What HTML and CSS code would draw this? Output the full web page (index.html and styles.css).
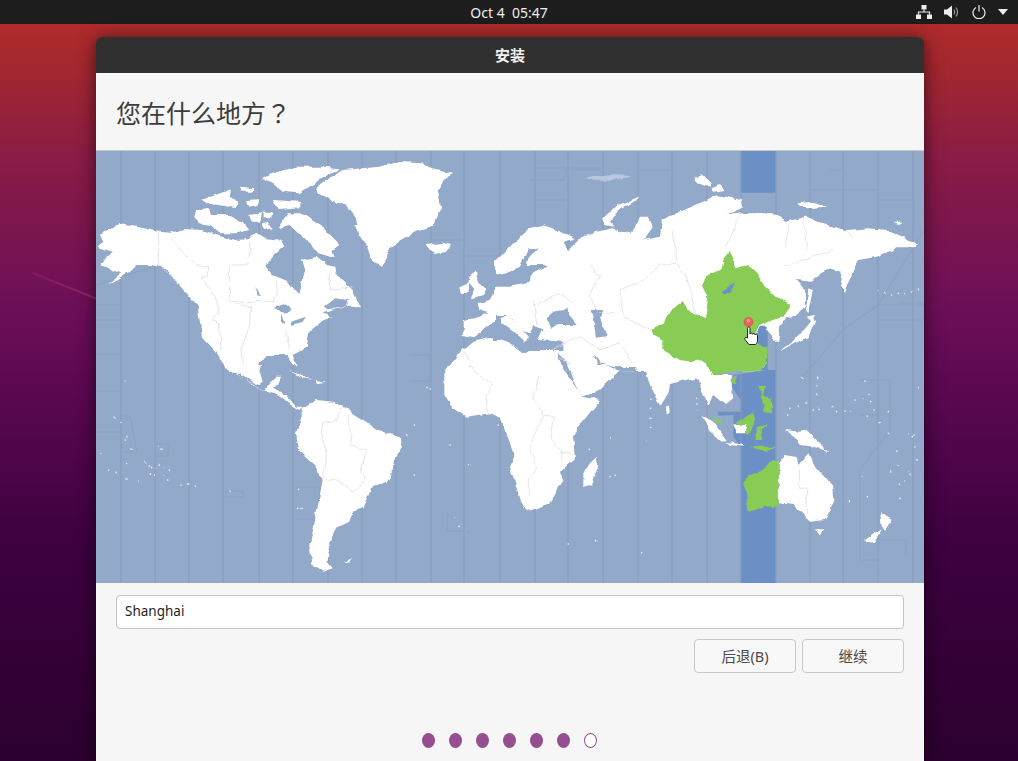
FILE: index.html
```html
<!doctype html>
<html lang="zh-CN">

<head>
    <meta charset="utf-8" />
    <link rel="icon" href="data:,">
    <meta name="viewport" content="width=device-width, initial-scale=1">
    <link rel="stylesheet" href="styles.css">
</head>

<body>
    <div class="topbar">
        <div class="clock">Oct 4&nbsp; 05:47</div>
        <div class="status">
            <svg class="icon-net" width="16" height="14" viewBox="0 0 16 14">
                <path d="M5.500 0h5v4.500h-5zM0 9.500h5V14H0zM11 9.500h5V14h-5z" />
                <path class="wire" d="M8 4.500v2.500M2.500 9.500V7h11v2.500" />
            </svg>
            <svg class="icon-vol" width="16" height="14" viewBox="0 0 16 14">
                <path d="M0 4.500h3L8 .5v13l-5-4H0z" />
                <path class="wave" d="M10 4.500q1.500 2.500 0 5M12 2.500q3 4.500 0 9" />
            </svg>
            <svg class="icon-power" width="14" height="14" viewBox="0 0 14 14">
                <path class="ring" d="M4 2.500a6 6 0 1 0 6 0M7 0v6.500" />
            </svg>
            <svg class="icon-caret" width="10" height="6" viewBox="0 0 10 6">
                <path d="M0 0h10L5 6z" />
            </svg>
        </div>
    </div>

    <div class="desktop">
        <div class="window">
            <div class="titlebar">安装</div>
            <div class="content">
                <h1 class="heading"><span>您在什么地方<span class="qmark" lang="zh-TW">？</span></span></h1>

                <svg class="map" viewBox="96 151 828 432" width="828" height="432">
                    <defs>
                        <filter id="coast" filterUnits="userSpaceOnUse" x="96" y="151" width="828" height="432" color-interpolation-filters="sRGB">
                            <feTurbulence type="fractalNoise" baseFrequency="0.09" numOctaves="3" seed="4" result="noise" />
                            <feDisplacementMap in="SourceGraphic" in2="noise" scale="5" xChannelSelector="R" yChannelSelector="G" />
                            <feGaussianBlur stdDeviation="0.35" />
                        </filter>
                    </defs>

                    <rect class="sea" x="96" y="151" width="828" height="432" />

                    <!-- selected zone -->
                    <g transform="translate(500 150) scale(.33333)">
                        <path class="zone" d="M722 3h105v125H722z" />
                        <path class="zone" d="M772 530h31v130h-31z" />
                    </g>
                    <g transform="translate(500 365) scale(.33333)">
                        <path class="zone" d="M700 30L800 15h27v640H722V245L700 215V150L655 152V140H722V105L695 65z" />
                    </g>

                    <!-- zone lines -->
                    <path class="tz" d="M121 151V583M155 151V583M189 151V583M223 151V583M259 151V583M293 151V583M328 151V583M362 151V583M396 151V583M431 151V583M464 151V583M500 151V583M535 151V583M568 151V583M603 151V583M638 151V583M672 151V583M707 151V583M741 151V583M776 151V583M810 151V583M843 151V583M878 151V583M913 151V583" />
                    <path class="tz-soft" d="M96 305H121V354H96M96 391H121V432H96M123 416H130L137 452H120M155 444H168V456H155M225 491H243V497H225M296 487H319V519H296M447 531H468V534M447 512V533M410 381H430V355H410M431 240H464V262M464 256H500V180M530 180H565V170H600M535 168H603V173M568 200H535V235M640 170H672V173M830 170H843V190H810V230H843M843 190H878M878 200H914V230M878 305H924M878 305L843 330L800 380M924 230L878 305M898 303H924V320H878M860 380H890V430L860 470V560H878M878 540H906V556M860 415H878V450M96 285L156 266M96 320H120" />

                    <g filter="url(#coast)">
                        <!-- north america, greenland, western europe -->
                        <g transform="translate(96 150) scale(.33333)">
                            <path class="land" d="M5 290L22 272 12 255 70 222 130 232 185 245 225 248 265 237 320 240 370 258 415 270 460 268 480 248 510 268 555 272 565 288 535 315 508 348 530 375 572 392 592 418 610 435 618 400 628 360 618 330 660 320 690 345 718 350 722 375 770 420 792 472 755 470 722 478 680 490 705 500 680 512 640 545 632 590 590 612 605 650 592 640 575 615 520 615 490 635 480 665H400L360 605 318 560 305 470 280 440 245 400 210 355 165 345 120 345 95 370 30 405 75 370 40 355 10 345 50 305z" />
                            <path class="land" d="M660 115L700 85 740 60 850 50 900 35 980 40 1005 55 1075 68 1040 90 1025 120 1035 170 1010 230 960 245 900 280 875 310 855 348 825 325 810 280 790 260 780 205 750 165 700 150 670 130z" />
                            <path class="land" d="M315 150L350 135 405 115 400 140 430 155 420 175 370 165 330 160zM300 180L340 178 345 195 400 195 440 215 460 240 420 250 370 250 340 225 310 220 295 205zM575 190L620 190 660 215 690 235 695 250 730 285 710 300 715 325 670 310 650 285 625 270 600 240 580 225 545 235zM530 70L600 50 680 50 735 55 690 75 640 110 610 130 560 125 530 100 500 85zM530 150L610 155 610 175 550 180zM435 110L475 115 470 125 440 125zM450 150L490 148 485 170 455 165zM500 185L530 185 525 205 500 205zM460 195L495 190 490 215 465 215zM495 220L520 215 530 235 505 240zM775 225L800 230 805 270 790 260z" />
                            <path class="land" d="M990 285L1040 278 1065 285 1050 305 1015 312 995 300zM1120 380L1140 365 1145 395 1170 420 1165 435 1125 445 1135 420 1118 400zM1090 410L1120 400 1118 425 1095 432z" />
                            <path class="land" d="M1270 275L1225 310 1200 345 1215 360 1250 395H1270zM1270 405L1215 412 1180 450 1145 460 1150 480 1175 490 1135 505 1100 510 1100 555 1135 562 1180 525 1230 505 1270 535zM1050 660L1100 600 1130 575 1200 560 1270 565V665H1050z" />
                            <path class="water" d="M530 470L560 460 590 480 570 490zM555 490L565 520 555 520zM585 515L630 500 620 515 590 525zM478 410L495 440 485 440zM680 470L720 445 755 450 750 470 700 480z" />
                            <path class="border" d="M188 245V345L245 395M400 350V455L465 470 460 530 435 600 440 655M225 265L260 310 300 345 335 350V375L315 380 360 440 370 490 350 510 370 520 375 600M460 270V345H400M400 455H530M540 390L545 430 530 460M570 540L580 600M700 370V420L770 410M1100 600L1130 640M1220 570L1230 650" />
                        </g>

                        <!-- americas south, pacific, west africa -->
                        <g transform="translate(96 365) scale(.33333)">
                            <path class="land" d="M410 0L435 35 480 65 505 75 515 60 540 35 555 35 545 60 530 70 575 95 600 125 625 125 610 135 585 120 555 95 510 78 470 62 430 30 400 0zM415 0H495L490 20 500 50 480 60 440 30z" />
                            <path class="land" d="M620 130L660 105 710 110 740 125 770 145 810 170 850 195 915 220 918 245 890 290 885 340 825 370 800 430 770 440 760 470 720 490 700 530 695 590 710 610 680 620 650 600 640 540 655 480 680 345 660 305 610 260 600 205 620 160z" />
                            <path class="land" d="M1045 30L1060 0H1275V350L1245 310 1255 270 1215 160 1180 145 1110 155 1070 130 1045 90zM580 20L610 30 650 45 620 40zM660 45L690 50 660 55zM740 590L765 580 760 590z" />
                            <path class="border" d="M680 175L675 220 695 260 680 345M680 175L715 170 740 125M755 150L765 210 760 240 810 255 795 320 810 340 770 385 730 345 690 350M1115 0L1190 60 1170 90 1175 145M1225 0L1260 20" />
                            <path class="dots" d="M88 45h0M60 157h0M75 172h0M90 215h0M85 225h0M108 252h0M15 265h0M95 298h0M35 315h0M60 322h0M90 342h0M130 352h0M135 310h0M150 290h0M160 300h0M170 305h0M180 310h0M190 300h0M205 310h0M220 318h0M205 330h0M215 345h0M175 330h0M160 325h0M258 358h0M275 360h0M298 360h0M405 380h0M608 373h0M605 430h0M615 430h0M955 180h0M935 213h0M1060 240h0M1118 298h0M958 330h0M1075 457h0M1092 484h0M990 68h0M1000 72h0M1207 183h0M190 245h0M198 255h0" />
                        </g>

                        <!-- asia -->
                        <g transform="translate(500 150) scale(.33333)">
                            <path class="land" d="M-15 335L0 320 40 280 90 235 130 225 170 240 225 265 190 275 205 300 235 270 255 255 290 245 340 235 365 245 395 250 420 200 445 200 455 235 430 270 480 260 485 210 540 185 600 160 650 135 725 150 730 175 680 195 725 190 790 190 830 195 855 215 920 200 980 225 1040 240 1110 235 1160 240 1220 265 1255 285 1240 295 1190 295 1130 320 1075 330 1060 360 1035 430 1020 400 1025 365 990 355 930 395 890 390 915 420 915 470 875 505 860 500 840 530 835 575 820 575 805 540 780 560 800 640 775 665H-15z" />
                            <path class="water" d="M-15 375L25 365 60 350 85 295 115 290 85 325 80 345 150 345 100 370 80 400 30 410-15 410zM-15 495L20 495 40 510 60 540 90 550 100 525 130 535 115 570 190 575 190 600 90 600 70 610 40 585 0 570-15 570zM140 505L170 480 205 475 210 500 230 525 180 525 150 530zM275 480L310 480 300 505 320 555 290 560 285 520zM170 605L190 620 210 665H195zM280 612L300 640 345 652 410 650 415 665H300z" />
                            <path class="land" d="M0 500L25 497 60 530 88 562 75 578 40 545 8 522z" />
                            <path class="green" d="M455 540L490 520 510 480 545 457 575 490 615 505 625 440 608 405 620 375 665 360 670 330 690 305 705 335 705 355 745 345 770 370 795 410 830 440 875 465 850 500 815 510 775 530 760 565 785 590 803 590 800 640 775 665H620V640L595 625 570 635 540 630 490 600 490 570 460 555z" />
                            <path class="zone" d="M665 430L705 395 695 420 672 435zM780 530L800 530 803 590 785 590 760 565z" />
                            <path class="land" d="M845 600L880 575 920 530 940 505 945 515 925 560 885 580 850 600zM920 500L945 495 935 515zM925 415L938 420 925 490 918 480zM310 205L350 165 420 140 415 150 360 175 330 215 345 230 315 225zM580 85L610 75 635 100 630 110 590 95zM635 115L660 105 675 120 640 125zM890 160L940 155 985 170 960 172 920 175 895 170zM1180 215L1205 215 1195 222z" />
                            <path class="faint" d="M260 82L330 72 395 75 340 92 280 92z" />
                            <path class="border" d="M270 345L300 380 270 440 295 490 350 490M360 420L440 385 480 345 530 340 560 380 590 500M530 330L520 240M680 290L720 190M855 290L870 220M850 350L1000 300M360 420L370 500 430 530 455 540M100 470L180 430 220 460M150 600L240 560 300 600 360 580M180 620L230 660M370 590L400 650M100 450L110 520M1040 240L1060 270M920 300L910 200" />
                            <path class="dots" d="M1135 422h0M1155 428h0M1175 432h0M1195 430h0M1215 428h0M1235 426h0M1255 420h0" />
                        </g>

                        <!-- east africa, south asia, oceania -->
                        <g transform="translate(500 365) scale(.33333)">
                            <path class="land" d="M-15 0H180L240 85 245 95 300 105 240 180 220 220 225 280 180 320 190 345 150 415 105 432 80 438 60 400 40 340 30 310 40 270 20 190 0 155-15 150z" />
                            <path class="land" d="M205 0H320L358 20 300 75 245 95 215 40zM340-5H620L640 30 695 30 695 60 700 100 675 120 640 90 625 120 590 40 510 60 505 85 480 125 450 60 440 30 415 5 340 5z" />
                            <path class="land" d="M497 125L510 120 512 140 500 145zM290 275L295 300 275 365 250 360 250 325 270 295zM605 150L640 170 680 225 665 230 625 195zM680 230L730 240 735 245 690 240zM700 178L740 180 735 205 710 205zM836 290L850 270 890 275 895 300 925 265 950 310 1000 365 1003 410 975 465 930 470 880 420 836 415zM945 490L970 490 960 512zM1140 442L1175 465 1155 495 1145 480zM1145 490L1125 530 1100 535 1095 525zM855 195L900 200 920 195 950 225 985 258 940 245 900 240 870 205z" />
                            <path class="green" d="M620 0L635 30 690 25 750 15 790 0zM780 5L788 5 778 25zM640 145L660 165 665 180 650 175zM705 175L760 140 765 160 745 210 735 205 740 180zM770 190L805 180 785 195 790 225 770 225zM775 60L795 60 790 90 810 100 820 125 815 145 790 140 785 85zM745 245L830 245 800 260 770 255zM700 35L710 35 705 55 695 55zM730 345L790 310 822 285 836 290V420L800 425 745 440 740 400z" />
                            <path class="border" d="M898 310V370H920V450M120 35L100 100 130 150 90 240 110 310 85 340 85 395M130 150L160 160 150 220 185 260 185 290M180 265H220" />
                            <path class="dots" d="M330 217h0M450 100h0M452 130h0M450 160h0M452 185h0M440 230h0M268 253h0M330 335h0M345 328h0M208 540h0M290 530h0M425 563h0M590 100h0M588 120h0M592 135h0M950 40h0M950 60h0M950 85h0M905 38h0M1095 48h0M1255 68h0M860 150h0M870 130h0M895 120h0M915 115h0M940 135h0M960 130h0M1000 125h0M1010 140h0M1035 138h0M1055 140h0M1065 105h0M1090 100h0M1110 85h0M1115 110h0M1105 150h0M1125 135h0M1165 140h0M1140 170h0M1165 205h0M1225 210h0M1245 210h0M1190 255h0M1245 250h0M1195 300h0M1175 315h0M1225 320h0M1255 285h0M1195 355h0M1215 345h0M1200 400h0M1105 395h0M1085 335h0M1045 410h0M1240 215h0M1230 330h0" />
                        </g>
                    </g>

                    <!-- pin and pointer -->
                    <path class="pin-stalk" d="M748.500 326V331" />
                    <circle class="pin" cx="748.500" cy="322" r="4.500" />
                    <circle class="pin-shine" cx="748.500" cy="320.500" r="2" />
                    <path class="hand" transform="translate(-1.500 -1)" d="M749 329.500c0-2 2.500-2 2.500 0v5.500c.5-1.500 2.500-1.200 2.500.3.500-1.300 2.500-1 2.500.5.500-1 2.500-.8 2.500.7v5c0 2-1 3-2 4h-6.500l-4-5c-1-1.500.8-3 2.500-1.500V329.500z" />
                </svg>

                <div class="form">
                    <input class="city" type="text" value="Shanghai" />
                    <div class="buttons">
                        <button class="btn">后退(B)</button>
                        <button class="btn">继续</button>
                    </div>
                </div>

                <div class="steps">
                    <span class="dot"></span>
                    <span class="dot"></span>
                    <span class="dot"></span>
                    <span class="dot"></span>
                    <span class="dot"></span>
                    <span class="dot"></span>
                    <span class="dot dot-current"></span>
                </div>
            </div>
        </div>
    </div>
</body>

</html>
```

FILE: styles.css
```css
html {
    font-family: "Noto Sans", "Noto Sans CJK SC", sans-serif;
    font-size: 14px;
}

body {
    margin: 0;
    height: 761px;
    overflow: hidden;
    display: flex;
    flex-direction: column;
}

.topbar {
    height: 24px;
    flex: none;
    background: #1d1d1d;
    color: #eeeeee;
    display: grid;
    grid-template-columns: 1fr auto 1fr;
    align-items: center;
    font-size: 14px;
}

.clock {
    grid-column: 2;
}

.status {
    grid-column: 3;
    display: flex;
    justify-content: flex-end;
    align-items: center;
    gap: 12px;
    padding-right: 10px;
}

.status svg {
    fill: #eeeeee;
    display: block;
}

.wire,
.wave,
.ring {
    fill: none;
    stroke: #eeeeee;
    stroke-width: 1.2;
}

.wave {
    stroke: #9a9a9a;
}

.desktop {
    position: relative;
    flex: 1;
    min-height: 0;
    padding: 13px 94px 0 96px;
    background: linear-gradient(180deg, #b02b2c 0%, #a3272f 6%, #8a1c45 18%, #6d0f58 38%, #5a0850 50%, #3e0140 70%, #2b002e 100%);
}

.desktop::before {
    content: "";
    position: absolute;
    left: 33px;
    top: 248px;
    width: 68px;
    height: 2px;
    background: linear-gradient(90deg, #7e1a62, #93265f);
    transform: rotate(22deg);
    transform-origin: left center;
}

.window {
    position: relative;
    width: 828px;
    height: 100%;
    box-shadow: 0 2px 18px rgba(0, 0, 0, 0.6);
    border-radius: 6px 6px 0 0;
    display: flex;
    flex-direction: column;
}

.titlebar {
    height: 36px;
    flex: none;
    box-sizing: border-box;
    padding-bottom: 2px;
    background: #303030;
    border-radius: 6px 6px 0 0;
    color: #f2f2f2;
    font-size: 15px;
    font-weight: 700;
    display: flex;
    align-items: center;
    justify-content: center;
}

.content {
    flex: 1;
    background: #f6f6f6;
    display: flex;
    flex-direction: column;
    overflow: hidden;
}

.heading {
    margin: 0;
    height: 78px;
    box-sizing: border-box;
    padding-left: 20px;
    border-bottom: 1px solid #cacaca;
    display: flex;
    align-items: center;
    font-family: "Noto Sans CJK SC", sans-serif;
    font-size: 25px;
    font-weight: 400;
    color: #3d3d3d;
}

.qmark {
    font-family: "Noto Sans CJK TC", sans-serif;
}

.map {
    display: block;
    flex: none;
}

.sea {
    fill: #93a9c9;
}

.zone {
    fill: #6c90c5;
}

.tz {
    fill: none;
    stroke: #869bbd;
    stroke-width: 1;
}

.tz-soft {
    fill: none;
    stroke: #8ba1c3;
    stroke-width: 1;
}

.land {
    fill: #ffffff;
}

.water {
    fill: #93a9c9;
}

.green {
    fill: #88cc55;
}

.faint {
    fill: #b9c8de;
}

.border {
    fill: none;
    stroke: #e0e0e0;
    stroke-width: 2.500;
}

.dots {
    fill: none;
    stroke: #eef2f8;
    stroke-width: 5;
    stroke-linecap: round;
}

.pin {
    fill: #ee5f5f;
    stroke: #d84a4a;
    stroke-width: 0.6;
}

.pin-shine {
    fill: #f58f8f;
}

.pin-stalk {
    fill: none;
    stroke: #c9c9c9;
    stroke-width: 1.500;
}

.hand {
    fill: #ffffff;
    stroke: #111111;
    stroke-width: 0.9;
}

.form {
    padding: 12px 20px 0;
    display: flex;
    flex-direction: column;
    gap: 10px;
}

.city {
    height: 34px;
    box-sizing: border-box;
    padding: 0 8px 2px;
    background: #ffffff;
    border: 1px solid #c4c4c4;
    border-radius: 4px;
    font-family: inherit;
    font-size: 13.500px;
    color: #1f1f1f;
}

.buttons {
    display: flex;
    justify-content: flex-end;
    gap: 6px;
}

.btn {
    width: 102px;
    height: 34px;
    padding: 0 0 2px;
    background: #f8f8f8;
    border: 1px solid #c8c8c8;
    border-radius: 4px;
    font-family: inherit;
    font-size: 14.500px;
    color: #4a4a4a;
}

.steps {
    margin-top: 60px;
    padding-right: 1px;
    display: flex;
    justify-content: center;
    gap: 14px;
}

.dot {
    width: 13px;
    height: 15px;
    box-sizing: border-box;
    border-radius: 50%;
    background: #954e8f;
}

.dot-current {
    background: #ffffff;
    border: 1px solid #954e8f;
}
```
